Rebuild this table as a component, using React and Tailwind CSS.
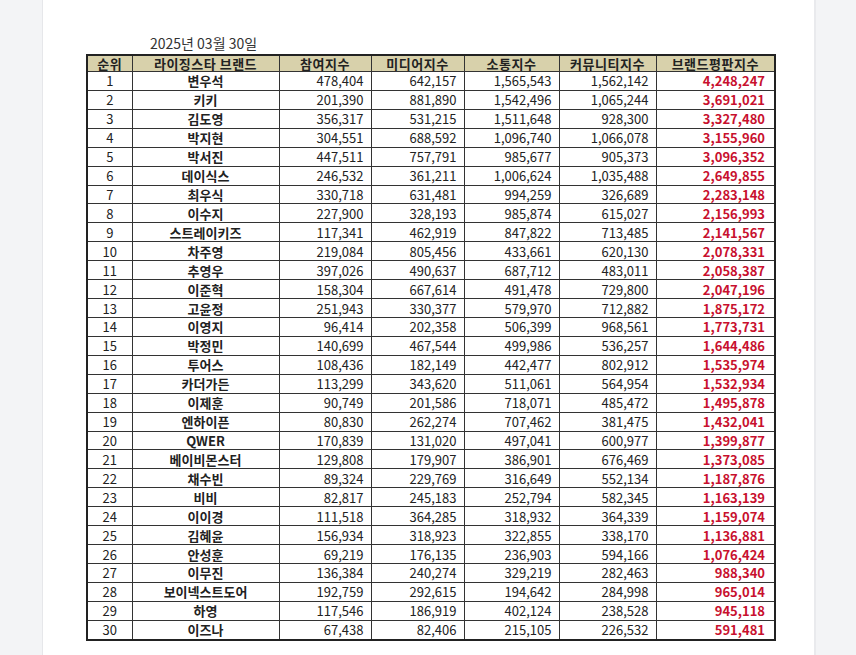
const rows = [
  ["1", "변우석", "478,404", "642,157", "1,565,543", "1,562,142", "4,248,247"],
  ["2", "키키", "201,390", "881,890", "1,542,496", "1,065,244", "3,691,021"],
  ["3", "김도영", "356,317", "531,215", "1,511,648", "928,300", "3,327,480"],
  ["4", "박지현", "304,551", "688,592", "1,096,740", "1,066,078", "3,155,960"],
  ["5", "박서진", "447,511", "757,791", "985,677", "905,373", "3,096,352"],
  ["6", "데이식스", "246,532", "361,211", "1,006,624", "1,035,488", "2,649,855"],
  ["7", "최우식", "330,718", "631,481", "994,259", "326,689", "2,283,148"],
  ["8", "이수지", "227,900", "328,193", "985,874", "615,027", "2,156,993"],
  ["9", "스트레이키즈", "117,341", "462,919", "847,822", "713,485", "2,141,567"],
  ["10", "차주영", "219,084", "805,456", "433,661", "620,130", "2,078,331"],
  ["11", "추영우", "397,026", "490,637", "687,712", "483,011", "2,058,387"],
  ["12", "이준혁", "158,304", "667,614", "491,478", "729,800", "2,047,196"],
  ["13", "고윤정", "251,943", "330,377", "579,970", "712,882", "1,875,172"],
  ["14", "이영지", "96,414", "202,358", "506,399", "968,561", "1,773,731"],
  ["15", "박정민", "140,699", "467,544", "499,986", "536,257", "1,644,486"],
  ["16", "투어스", "108,436", "182,149", "442,477", "802,912", "1,535,974"],
  ["17", "카더가든", "113,299", "343,620", "511,061", "564,954", "1,532,934"],
  ["18", "이제훈", "90,749", "201,586", "718,071", "485,472", "1,495,878"],
  ["19", "엔하이픈", "80,830", "262,274", "707,462", "381,475", "1,432,041"],
  ["20", "QWER", "170,839", "131,020", "497,041", "600,977", "1,399,877"],
  ["21", "베이비몬스터", "129,808", "179,907", "386,901", "676,469", "1,373,085"],
  ["22", "채수빈", "89,324", "229,769", "316,649", "552,134", "1,187,876"],
  ["23", "비비", "82,817", "245,183", "252,794", "582,345", "1,163,139"],
  ["24", "이이경", "111,518", "364,285", "318,932", "364,339", "1,159,074"],
  ["25", "김혜윤", "156,934", "318,923", "322,855", "338,170", "1,136,881"],
  ["26", "안성훈", "69,219", "176,135", "236,903", "594,166", "1,076,424"],
  ["27", "이무진", "136,384", "240,274", "329,219", "282,463", "988,340"],
  ["28", "보이넥스트도어", "192,759", "292,615", "194,642", "284,998", "965,014"],
  ["29", "하영", "117,546", "186,919", "402,124", "238,528", "945,118"],
  ["30", "이즈나", "67,438", "82,406", "215,105", "226,532", "591,481"],
]

const headers = ["순위", "라이징스타 브랜드", "참여지수", "미디어지수", "소통지수", "커뮤니티지수", "브랜드평판지수"]
const widths = ["w-[45px]", "w-[147px]", "w-[92px]", "w-[93px]", "w-[95px]", "w-[97px]", "w-[119px]"]

export default function App() {
  return (
    <div
      className="flex h-[655px] w-[856px] overflow-hidden bg-white text-[#222]"
      style={{ fontFamily: '"Noto Sans CJK KR", "Noto Sans", sans-serif' }}
    >
      {/* side strips */}
      <div className="w-[43px] shrink-0 border-r border-[#e6e7ea] bg-[#f3f4f6]" />

      <div className="flex-1 pl-[43px] pt-[34px]">
        <div className="pl-[64px] text-[14px] leading-[18px] text-[#333]">2025년 03월 30일</div>

        <table className="mt-[2px] h-[587px] w-[689px] table-fixed border-collapse border-2 border-[#222] text-[13px] leading-[15px]">
          <colgroup>
            {widths.map((w, i) => (
              <col key={i} className={w} />
            ))}
          </colgroup>
          <thead>
            <tr className="bg-[#d8d1ab]">
              {headers.map((h) => (
                <th key={h} className="border border-[#333] p-0 text-center font-bold tracking-[0.5px] text-[#222]">
                  {h}
                </th>
              ))}
            </tr>
          </thead>
          <tbody>
            {rows.map((r) => (
              <tr key={r[0]}>
                <td className="border border-[#333] p-0 text-center">{r[0]}</td>
                <td className="border border-[#333] p-0 text-center font-bold">{r[1]}</td>
                {r.slice(2, 6).map((v, i) => (
                  <td key={i} className="border border-[#333] p-0 pr-[7px] text-right">
                    {v}
                  </td>
                ))}
                <td className="border border-[#333] p-0 pr-[9px] text-right font-bold text-[#c8102e]">{r[6]}</td>
              </tr>
            ))}
          </tbody>
        </table>
      </div>

      <div className="w-[42px] shrink-0 border-l-2 border-[#e9eaed] bg-[#f3f4f6]" />
    </div>
  )
}
